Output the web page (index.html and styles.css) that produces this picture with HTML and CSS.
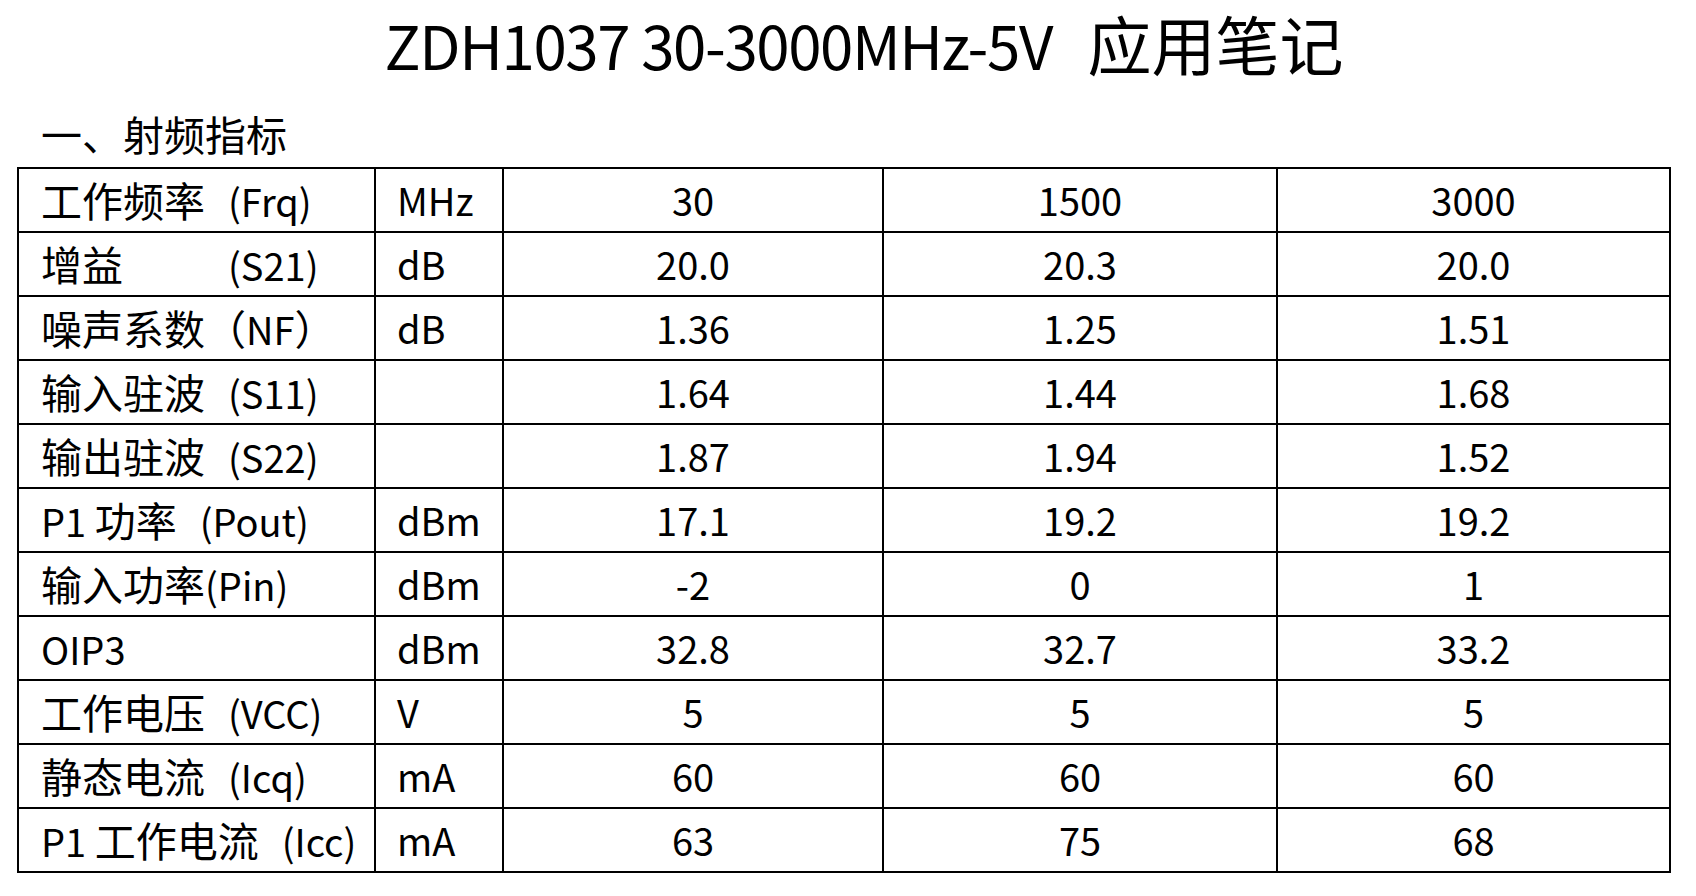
FILE: index.html
```html
<!DOCTYPE html>
<html lang="zh-CN">
<head>
    <meta charset="UTF-8">
    <meta name="viewport" content="width=device-width, initial-scale=1.0">
    <title>ZDH1037 应用笔记</title>
    <link rel="stylesheet" href="styles.css">
</head>
<body>

    <h1 class="title"><span class="title-lat">ZDH1037 30-3000MHz-5V</span> <span class="title-zh">应用笔记</span></h1>

    <h2 class="section">一、射频指标</h2>

    <table class="specs">
        <colgroup>
            <col class="col-name">
            <col class="col-unit">
            <col class="col-val1">
            <col class="col-val2">
            <col class="col-val3">
        </colgroup>
        <tr>
            <td class="name">工作频率<span class="sym">(Frq)</span></td>
            <td class="unit">MHz</td>
            <td>30</td>
            <td>1500</td>
            <td>3000</td>
        </tr>
        <tr>
            <td class="name"><span class="tab">增益</span><span class="lat">(S21)</span></td>
            <td class="unit">dB</td>
            <td>20.0</td>
            <td>20.3</td>
            <td>20.0</td>
        </tr>
        <tr>
            <td class="name">噪声系数（<span class="lat">NF</span>）</td>
            <td class="unit">dB</td>
            <td>1.36</td>
            <td>1.25</td>
            <td>1.51</td>
        </tr>
        <tr>
            <td class="name">输入驻波<span class="sym">(S11)</span></td>
            <td class="unit"></td>
            <td>1.64</td>
            <td>1.44</td>
            <td>1.68</td>
        </tr>
        <tr>
            <td class="name">输出驻波<span class="sym">(S22)</span></td>
            <td class="unit"></td>
            <td>1.87</td>
            <td>1.94</td>
            <td>1.52</td>
        </tr>
        <tr>
            <td class="name"><span class="lat">P1 </span>功率<span class="sym">(Pout)</span></td>
            <td class="unit">dBm</td>
            <td>17.1</td>
            <td>19.2</td>
            <td>19.2</td>
        </tr>
        <tr>
            <td class="name">输入功率<span class="lat">(Pin)</span></td>
            <td class="unit">dBm</td>
            <td>-2</td>
            <td>0</td>
            <td>1</td>
        </tr>
        <tr>
            <td class="name"><span class="lat">OIP3</span></td>
            <td class="unit">dBm</td>
            <td>32.8</td>
            <td>32.7</td>
            <td>33.2</td>
        </tr>
        <tr>
            <td class="name">工作电压<span class="sym">(VCC)</span></td>
            <td class="unit">V</td>
            <td>5</td>
            <td>5</td>
            <td>5</td>
        </tr>
        <tr>
            <td class="name">静态电流<span class="sym">(Icq)</span></td>
            <td class="unit">mA</td>
            <td>60</td>
            <td>60</td>
            <td>60</td>
        </tr>
        <tr>
            <td class="name"><span class="lat">P1 </span>工作电流<span class="sym">(Icc)</span></td>
            <td class="unit">mA</td>
            <td>63</td>
            <td>75</td>
            <td>68</td>
        </tr>
    </table>

</body>
</html>
```

FILE: styles.css
```css
body {
    font-family: "Noto Sans CJK SC", "Noto Sans", sans-serif;
    background-color: #fff;
    color: #000;
    margin: 0;
}

.title {
    font-size: 64px;
    font-weight: normal;
    line-height: 94px;
    text-align: center;
    margin: -5px 0 0;
    padding: 0 0 0 32px;
}

.title-lat {
    font-size: 60px;
    line-height: 60px;
    letter-spacing: -1.4px;
}

.title-zh {
    margin-left: 21px;
}

.section {
    font-size: 41px;
    font-weight: normal;
    line-height: 60px;
    margin: 0;
    padding: 14px 0 4px 41px;
}

.specs {
    border-collapse: collapse;
    table-layout: fixed;
    width: 1654px;
    margin-left: 17px;
    font-size: 38px;
}

.col-name { width: 357px; }
.col-unit { width: 128px; }
.col-val1 { width: 380px; }
.col-val2 { width: 394px; }
.col-val3 { width: 393px; }

.specs td {
    border: 2px solid #000;
    height: 62px;
    padding: 0;
    text-align: center;
    vertical-align: middle;
    line-height: 60px;
    white-space: nowrap;
}

.specs td.name {
    text-align: left;
    padding-left: 22px;
    font-size: 41px;
}

.specs td.unit {
    text-align: left;
    padding-left: 21px;
}

.lat,
.sym {
    font-size: 38px;
}

.sym {
    margin-left: 23px;
}

.tab {
    display: inline-block;
    width: 187px;
}
```
